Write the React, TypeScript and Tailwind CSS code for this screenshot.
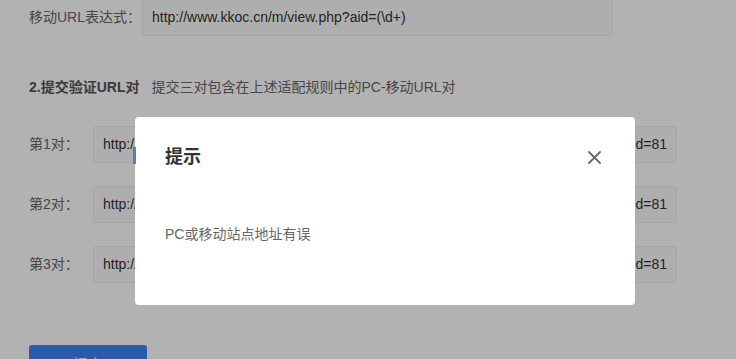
import React from "react"

const font = "font-['Liberation_Sans','Noto_Sans_CJK_SC',sans-serif]"

const pairs = [
  "http://www.kkoc.cn/view.php?aid=81",
  "http://www.kkoc.cn/view.php?aid=81",
  "http://www.kkoc.cn/view.php?aid=81",
]

function PairRow({ index, url }: { index: number; url: string }) {
  return (
    <div className="flex items-center">
      <span className="w-[64px] text-[14px] text-[#666]">第{index}对：</span>
      <div className="flex h-[37px] w-[584px] items-center justify-between rounded-[3px] border border-[#ececec] bg-[#fafafa] px-[9px] text-[14px] text-[#333]">
        <span>{url.slice(0, 12)}</span>
        <span>{url.slice(-5)}</span>
      </div>
    </div>
  )
}

export default function App() {
  return (
    <div className={`relative h-[359px] w-[736px] overflow-hidden bg-white ${font}`}>
      <div className="pl-[29px]">
        <div className="-mt-px flex items-center">
          <span className="w-[113px] text-[14px] text-[#666]">移动URL表达式：</span>
          <div className="flex h-[37px] w-[471px] items-center rounded-[3px] border border-[#ececec] bg-[#fafafa] px-[9px] text-[14px] text-[#333]">
            http://www.kkoc.cn/m/view.php?aid=(\d+)
          </div>
        </div>

        <div className="mt-[41px] flex h-[20px] items-center gap-[12px] text-[14px]">
          <span className="font-bold text-[#555]">2.提交验证URL对</span>
          <span className="text-[#666]">提交三对包含在上述适配规则中的PC-移动URL对</span>
        </div>

        <div className="mt-[29px] flex flex-col gap-[23px]">
          {pairs.map((url, i) => (
            <PairRow key={i} index={i + 1} url={url} />
          ))}
        </div>

        <button className="mt-[62px] flex h-[40px] w-[118px] items-center justify-center rounded-[3px] bg-[#3f81f1] text-[15px] text-white">
          提交
        </button>
      </div>

      {/* overlay */}
      <div className="absolute inset-0 bg-black/30" />

      {/* dialog */}
      <div className="absolute left-[135px] top-[117px] h-[188px] w-[500px] rounded-[4px] bg-white">
        <div className="absolute left-[-2px] top-[30px] h-[17px] w-[3px] bg-[#4a80d8]" />
        <div className="flex items-center justify-between pl-[30px] pr-[34px] pt-[28px]">
          <h2 className="text-[18px] font-bold leading-[24px] text-[#333]">提示</h2>
          <button aria-label="Close" className="flex h-[14px] w-[14px] items-center justify-center">
            <svg width="13" height="13" viewBox="0 0 13 13" fill="none" stroke="#666" strokeWidth="1.8" strokeLinecap="round">
              <path d="M1 1L12 12M12 1L1 12" />
            </svg>
          </button>
        </div>
        <p className="mt-[55px] pl-[30px] text-[14px] leading-[20px] text-[#666]">PC或移动站点地址有误</p>
      </div>
    </div>
  )
}
